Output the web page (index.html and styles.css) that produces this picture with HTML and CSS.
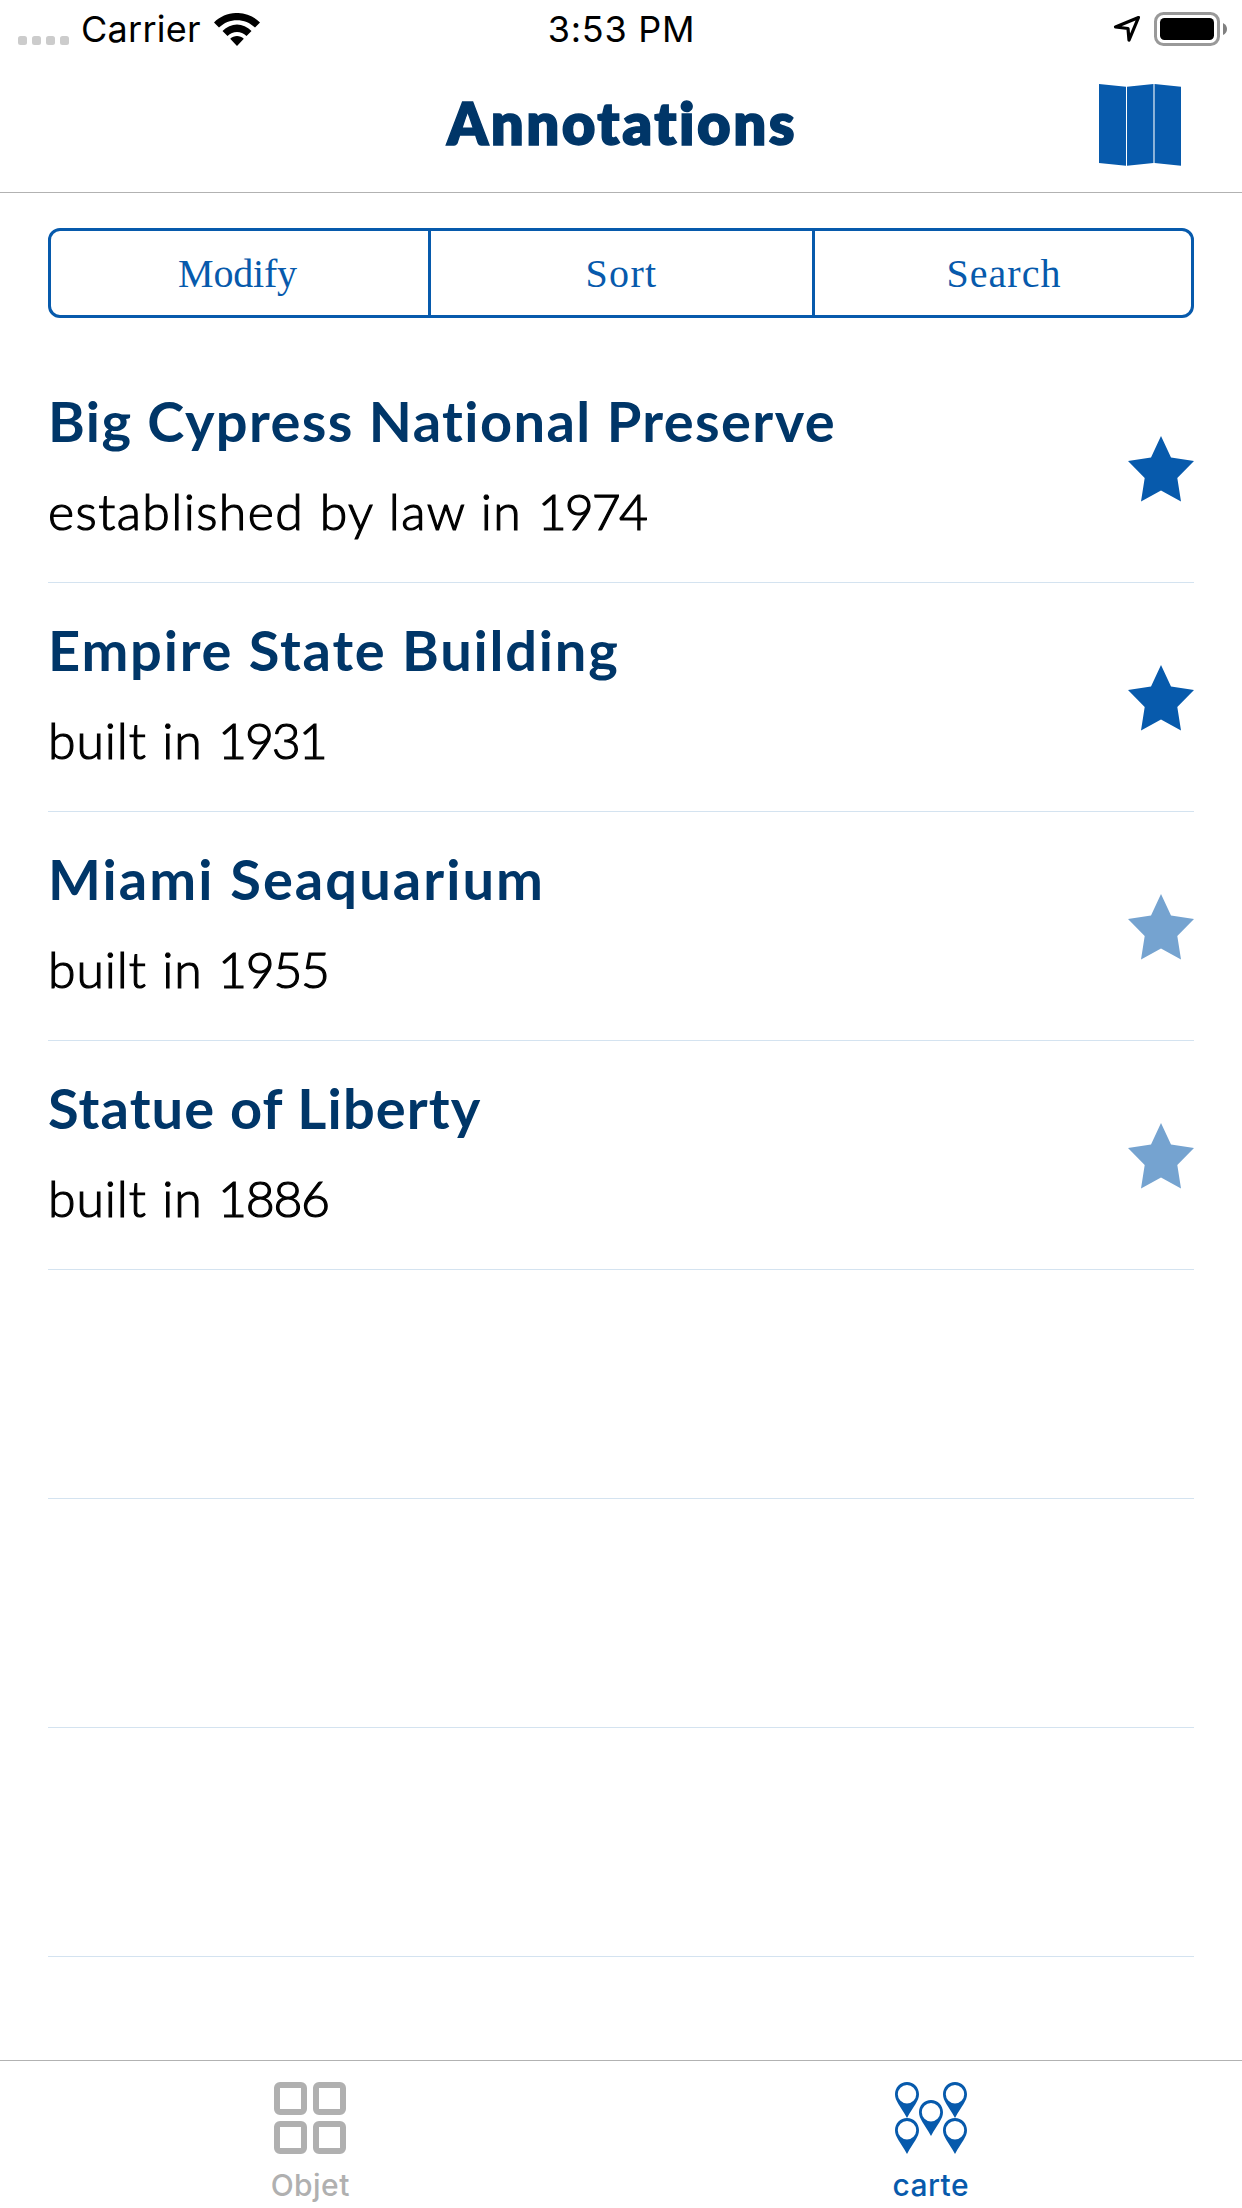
FILE: index.html
```html
<!DOCTYPE html>
<html lang="en">
<head>
<meta charset="utf-8">
<title>Annotations</title>
<link rel="stylesheet" href="styles.css">
</head>
<body>
<svg class="defs" aria-hidden="true">
  <symbol id="star" viewBox="0 0 66 66"><path d="M33 0 43 21.5 66 25 49.3 42 53 65.500 33 54.500 13 65.500 16.700 42 0 25 23 21.500Z"/></symbol>
  <symbol id="pin" viewBox="0 0 24 36"><path fill-rule="evenodd" d="M12 0C5.200 0 0 5.300 0 12.200C0 19 5.500 24 12 36C18.500 24 24 19 24 12.200C24 5.300 18.800 0 12 0ZM12 3a9.200 9.200 0 1 1 0 18.400a9.200 9.200 0 0 1 0-18.400Z"/></symbol>
</svg>
<div class="screen">
  <div class="status">
    <div class="carrier">
      <span class="dots"><i></i><i></i><i></i><i></i></span>
      <span class="carrier-name">Carrier</span>
      <svg class="wifi" viewBox="0 0 46 33">
        <path d="M0 9.500C12.500-3.200 33.500-3.200 46 9.500L41 14.500C31.200 4.700 14.800 4.700 5 14.500Z"/>
        <path d="M8.500 18C16.700 9.200 29.300 9.200 37.500 18L32.500 23C27 17.600 19 17.600 13.500 23Z"/>
        <path d="M16.200 25.800C20 22 26 22 29.800 25.800L23 33Z"/>
      </svg>
    </div>
    <div class="time">3:53 PM</div>
    <div class="power">
      <svg class="arrow" viewBox="0 0 29 28"><path d="M25.500 2.500 2.500 12 15 13.500 16 25.200Z"/></svg>
      <svg class="battery" viewBox="0 0 74 34">
        <rect class="shell" x="1.500" y="1.500" width="63" height="31" rx="8"/>
        <rect x="6" y="6" width="54" height="22" rx="4.500"/>
        <path class="nub" d="M69 11Q73 13 73 17T69 23Z"/>
      </svg>
    </div>
  </div>
  <header class="nav">
    <h1>Annotations</h1>
    <svg class="map" viewBox="0 0 82 82">
      <path d="M0 0 27 2.700V81.700L0 79ZM28 2.700 54.500 0V79L28 81.700ZM55.500 0 82 2.700V81.700L55.500 79Z"/>
      <path class="fold" d="M54 0h1.500v79H54Z"/>
    </svg>
  </header>
  <main class="content">
    <div class="segments">
      <button class="modify">Modify</button>
      <button class="sort">Sort</button>
      <button class="search">Search</button>
    </div>
    <ul class="list">
      <li class="row cypress"><div class="text"><h2>Big Cypress National Preserve</h2><p>established by law in <span class="year">1974</span></p></div><svg class="star"><use href="#star"/></svg></li>
      <li class="row empire"><div class="text"><h2>Empire State Building</h2><p>built in <span class="year">1931</span></p></div><svg class="star"><use href="#star"/></svg></li>
      <li class="row miami"><div class="text"><h2>Miami Seaquarium</h2><p>built in <span class="year">1955</span></p></div><svg class="star faded"><use href="#star"/></svg></li>
      <li class="row liberty"><div class="text"><h2>Statue of Liberty</h2><p>built in <span class="year">1886</span></p></div><svg class="star faded"><use href="#star"/></svg></li>
      <li class="row"></li>
      <li class="row"></li>
      <li class="row"></li>
    </ul>
  </main>
  <nav class="tabs">
    <a class="tab">
      <span class="grid"><i></i><i></i><i></i><i></i></span>
      <span class="label">Objet</span>
    </a>
    <a class="tab active">
      <svg class="pins" viewBox="0 0 72 72">
        <use href="#pin" x="0" y="0" width="24" height="36"/>
        <use href="#pin" x="48" y="0" width="24" height="36"/>
        <use href="#pin" x="24" y="18" width="24" height="36"/>
        <use href="#pin" x="0" y="36" width="24" height="36"/>
        <use href="#pin" x="48" y="36" width="24" height="36"/>
      </svg>
      <span class="label">carte</span>
    </a>
  </nav>
</div>
</body>
</html>
```
FILE: styles.css
```css
* { box-sizing: border-box; margin: 0; padding: 0; }
body { background: #fff; }
svg { display: block; }
.defs { display: none; }
.screen { width: 1242px; height: 2208px; display: flex; flex-direction: column; overflow: hidden; }

.status {
  height: 58px; padding: 0 14px 0 18px; flex: none;
  display: grid; grid-template-columns: 1fr auto 1fr; align-items: center;
  font: 400 36px/58px Inter, sans-serif; color: #000;
}
.carrier, .power { display: flex; align-items: center; }
.dots { display: flex; gap: 5px; margin-top: 23px; }
.dots i { width: 9px; height: 9px; border-radius: 2.5px; background: #ccc; }
.carrier-name { margin-left: 12px; letter-spacing: .25px; }
.wifi { width: 46px; height: 33px; margin-left: 13px; }
.time { letter-spacing: .7px; margin-right: 3px; }
.power { justify-content: flex-end; gap: 12px; }
.arrow { width: 29px; height: 28px; fill: none; stroke: #000; stroke-width: 3.2; stroke-linejoin: round; }
.battery { width: 74px; height: 34px; }
.shell { fill: none; stroke: #999; stroke-width: 3; }
.nub { fill: #808080; }

.nav {
  height: 135px; flex: none; border-bottom: 1px solid #b2b2b2; padding: 26px 61px 0 145px;
  display: flex; align-items: flex-start; justify-content: space-between;
}
.nav h1 {
  flex: 1; margin-top: 5px; text-align: center; color: #003668;
  font: 800 58px/68px Lato, sans-serif; letter-spacing: 2.5px; -webkit-text-stroke: 1.4px #003668;
}
.map { width: 82px; height: 82px; fill: #075aac; }
.map .fold { fill: #8db4da; }

.content { flex: 1; padding: 35px 48px 0; }
.segments {
  height: 90px; border: 3px solid #075aac; border-radius: 12px;
  display: grid; grid-template-columns: 380px 384px 1fr;
}
.segments button {
  border: 0; border-right: 3px solid #075aac; background: none; color: #075aac;
  font: 40px "Liberation Serif", serif;
}
.segments button:last-child { border-right: 0; }
.segments .modify { letter-spacing: -.2px; padding-right: 4px; }
.segments .sort { letter-spacing: 1.3px; }
.segments .search { letter-spacing: 1.05px; padding-left: 2px; }

.list { list-style: none; margin-top: 36px; }
.row {
  height: 229px; border-bottom: 1px solid #d4e3f0;
  display: flex; justify-content: space-between; align-items: flex-start;
}
.text { padding-top: 33px; white-space: nowrap; }
.text h2 { font: 700 56px/68px Lato, sans-serif; color: #003668; }
.text p {
  margin-top: 26px; font: 300 50px/60px Lato, sans-serif; color: #000;
  letter-spacing: .9px; word-spacing: .9px; -webkit-text-stroke: 1.2px #000;
}
.year { letter-spacing: -1.3px; }
.cypress h2 { letter-spacing: 1.4px; }
.cypress p { letter-spacing: 1.4px; word-spacing: .5px; }
.cypress .year { letter-spacing: -1.9px; }
.empire h2 { letter-spacing: 1.8px; }
.empire .year { letter-spacing: -2.1px; }
.miami h2 { letter-spacing: 2.05px; }
.liberty h2 { letter-spacing: 1.1px; }
.star { width: 66px; height: 66px; margin-top: 82px; fill: #075aac; }
.star.faded { fill: #75a3d0; }

.tabs { height: 148px; flex: none; border-top: 1px solid #b2b2b2; display: grid; grid-template-columns: 1fr 1fr; padding-right: 1px; }
.tab { display: flex; flex-direction: column; align-items: center; padding-top: 21px; color: #b0b0b0; }
.tab.active { color: #075aac; }
.grid { display: grid; grid-template-columns: 33px 33px; gap: 6px; }
.grid i { height: 33px; border: 6px solid currentColor; border-radius: 6px; }
.pins { width: 72px; height: 72px; fill: currentColor; }
.label { margin-top: 13px; font: 500 30px/36px Inter, sans-serif; letter-spacing: .45px; }
```
